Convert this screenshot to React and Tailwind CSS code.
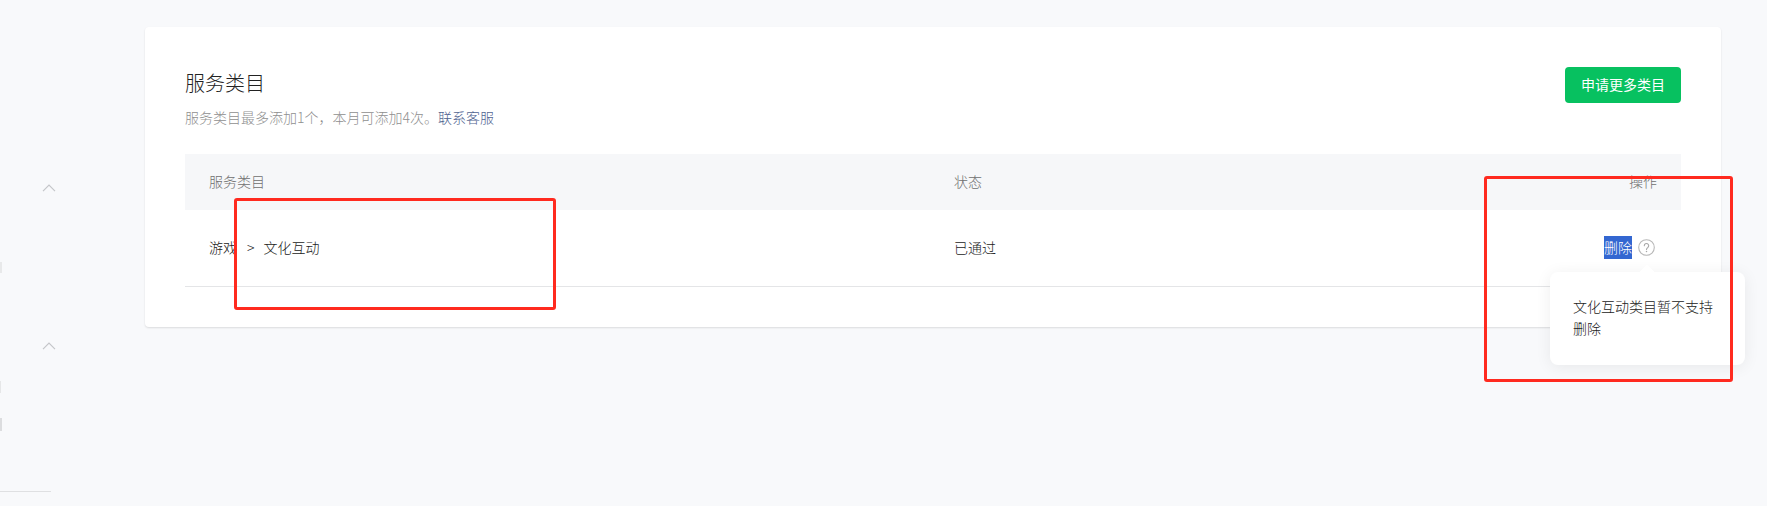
import React from "react";

function Chevron() {
  return (
    <svg width="14" height="8" viewBox="0 0 14 8" fill="none" className="block">
      <path d="M1 7.2 L7 1.2 L13 7.2" stroke="#c4c6c9" strokeWidth="1.2" />
    </svg>
  );
}

function Help() {
  return (
    <svg width="17" height="17" viewBox="0 0 17 17" fill="none" className="block">
      <circle cx="8.5" cy="8.5" r="7.8" stroke="#b8b8b8" strokeWidth="1.1" />
      <path d="M6.3 6.7a2.2 2.2 0 1 1 3.5 1.8c-.8.55-1.3 1-1.3 2" stroke="#a8a8a8" strokeWidth="1.1" strokeLinecap="round" />
      <circle cx="8.5" cy="12.6" r=".75" fill="#a8a8a8" />
    </svg>
  );
}

function Sidebar() {
  return (
    <aside className="w-[51px] h-[506px] shrink-0 flex flex-col">
      <div className="h-[184px] shrink-0" />
      <div className="flex justify-end h-[8px]">
        <div className="mr-[-5px]"><Chevron /></div>
      </div>
      <div className="mt-[70px] w-[2px] h-[11px] bg-[#e8e9ea]" />
      <div className="h-[69px] shrink-0" />
      <div className="flex justify-end h-[8px]">
        <div className="mr-[-5px]"><Chevron /></div>
      </div>
      <div className="mt-[31px] w-[1px] h-[12px] bg-[#e6e7e8]" />
      <div className="mt-[25px] w-[2px] h-[13px] bg-[#dcdddf]" />
      <div className="mt-[60px] h-px w-full bg-[#dfe0e2]" />
    </aside>
  );
}

export default function App() {
  return (
    <div
      className="relative w-[1767px] h-[506px] overflow-hidden bg-[#f8f9fb] flex text-[#222222] text-sm font-light"
      style={{ fontFamily: '"Noto Sans CJK SC", "Liberation Sans", sans-serif' }}
    >
      <Sidebar />
      <main className="flex-1 pl-[94px] pr-[46px] pt-[27px]">
        <section className="bg-white rounded-[4px] shadow-[0_1px_2px_rgba(0,0,0,0.12)] px-10 pt-10 pb-10 h-[300px]">
          <div className="flex justify-between items-start h-[87px]">
            <div>
              <h1 className="text-[20px] leading-8 font-light text-[#222222]">服务类目</h1>
              <p className="mt-2 text-[14px] leading-5 text-[#8f8f8f]">
                服务类目最多添加1个，本月可添加4次。<a className="text-[#4f6390]">联系客服</a>
              </p>
            </div>
            <button className="w-[116px] h-9 rounded-[4px] bg-[#07c160] text-white text-[14px] font-normal pb-[2px]">
              申请更多类目
            </button>
          </div>
          <div className="flex items-center h-14 px-6 pb-[2px] bg-[#f6f7f9] text-[#6f6f6f] text-[14px]">
            <div className="w-[745px]">服务类目</div>
            <div className="flex-1">状态</div>
            <div>操作</div>
          </div>
          <div className="relative flex items-center h-[77px] px-6 pb-[2px] border-b border-[#e4e5e7] text-[14px] text-[#222222]">
            <div className="w-[745px] flex">
              <span>游戏</span>
              <span className="ml-[10px]">&gt;</span>
              <span className="ml-[9px]">文化互动</span>
            </div>
            <div className="flex-1">已通过</div>
            <div className="flex items-center gap-[6px] mr-[2px]">
              <span className="inline-block h-[23px] leading-[23px] bg-[#3367d1] text-white">删除</span>
              <Help />
            </div>
          </div>
        </section>
      </main>

      <div className="absolute left-[1550px] top-[272px] w-[195px] h-[93px] bg-white rounded-lg shadow-[0_2px_16px_rgba(0,0,0,0.07)] px-[23px] pt-[23px] text-[14px] leading-[22px] text-[#222222]">
        <span className="absolute left-[91px] top-[-5px] w-3 h-3 rotate-45 bg-white" />
        <p className="relative">文化互动类目暂不支持删除</p>
      </div>

      <div className="absolute left-[234px] top-[198px] w-[322px] h-[112px] border-[3px] border-[#ff2a1f] rounded-[3px]" />
      <div className="absolute left-[1484px] top-[176px] w-[249px] h-[206px] border-[3px] border-[#ff2a1f] rounded-[3px]" />
    </div>
  );
}
